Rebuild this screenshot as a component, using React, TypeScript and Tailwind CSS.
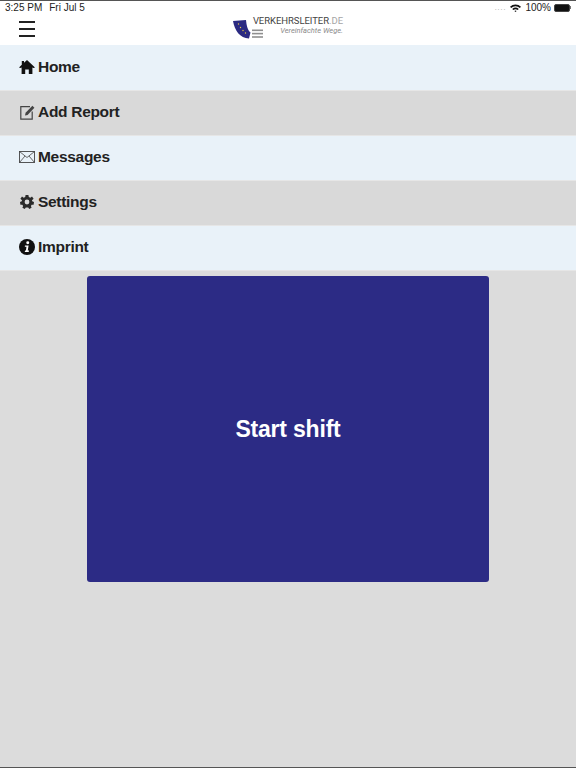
import React from "react";

const font = { fontFamily: '"Liberation Sans", Arial, sans-serif' };

function HomeIcon() {
  return (
    <svg width="16" height="14" viewBox="0 0 16 14" className="block">
      <path d="M8 0 L16 7.4 L14.6 7.9 L13.4 7.4 V14 H9.8 V9.6 H6.2 V14 H2.6 V7.4 L1.4 7.9 L0 7.4 L2.8 4.8 V1 H5 V2.8 Z" fill="#111" />
    </svg>
  );
}

function EditIcon() {
  return (
    <svg width="15" height="15" viewBox="0 0 15 15" className="block">
      <path d="M10 1.7 H0.8 V14.2 H12.2 V6.5" fill="none" stroke="#444" strokeWidth="1.2" />
      <path d="M5 10.5 L5.6 7.7 L12.4 0.8 L14.4 2.8 L7.6 9.9 Z" fill="#444" />
    </svg>
  );
}

function MailIcon() {
  return (
    <svg width="16" height="12" viewBox="0 0 16 12" className="block">
      <rect x="0.5" y="0.5" width="15" height="11" fill="none" stroke="#444" strokeWidth="0.9" />
      <path d="M0.5 0.5 L8 6.5 L15.5 0.5 M0.5 11.5 L6 5 M15.5 11.5 L10 5" fill="none" stroke="#444" strokeWidth="0.8" />
    </svg>
  );
}

function GearIcon() {
  return (
    <svg width="14" height="14" viewBox="0 0 14 14" className="block">
      <path
        fillRule="evenodd"
        fill="#2a2a2a"
        d="M5.6 0 H8.4 L8.8 2 L10.3 2.7 L12 1.6 L13.6 3.8 L12 5.2 L12.2 6.2 L14 7 L13.6 9.7 L11.7 9.7 L10.9 11 L11.6 12.8 L9.2 14 L8.2 12.4 H5.8 L4.8 14 L2.4 12.8 L3.1 11 L2.3 9.7 L0.4 9.7 L0 7 L1.8 6.2 L2 5.2 L0.4 3.8 L2 1.6 L3.7 2.7 L5.2 2 Z M7 4.6 A2.4 2.4 0 1 0 7 9.4 A2.4 2.4 0 1 0 7 4.6 Z"
      />
    </svg>
  );
}

function InfoIcon() {
  return (
    <svg width="16" height="16" viewBox="0 0 15 15" className="block">
      <circle cx="7.5" cy="7.5" r="7.5" fill="#111" />
      <circle cx="8.2" cy="3.6" r="1.4" fill="#fff" />
      <path d="M5.6 6 H9 L8.2 10.8 H9.4 L9.1 12.2 H5.4 L5.7 10.8 H6.5 L7 7.3 H5.4 Z" fill="#fff" />
    </svg>
  );
}

function Logo() {
  return (
    <div className="flex w-[110px] items-start">
      <svg width="30" height="24" viewBox="0 0 30 24" className="mt-[2px] block shrink-0">
        <path d="M0 2 L13 1 C13.5 6 14.5 11 17.5 13.5 L16 19.5 C7 19.5 1.5 11 0 2 Z" fill="#2b2a82" />
        <circle cx="5.5" cy="5" r="0.7" fill="#e5c84a" />
        <circle cx="7.5" cy="8.5" r="0.7" fill="#e5c84a" />
        <circle cx="10" cy="11.5" r="0.7" fill="#e5c84a" />
        <circle cx="12.5" cy="14" r="0.7" fill="#e5c84a" />
        <rect x="19" y="10.5" width="11" height="1.6" fill="#8f8f8f" />
        <rect x="19" y="13.8" width="11" height="1.6" fill="#8f8f8f" />
        <rect x="19" y="17.2" width="11" height="1.6" fill="#8f8f8f" />
      </svg>
      <div className="ml-[-11px] mt-[-2px] flex flex-1 flex-col items-end" style={{ fontFamily: 'Roboto, sans-serif' }}>
        <div className="whitespace-nowrap text-[9.5px] leading-[11px] tracking-[-0.05px] text-[#444]">
          VERKEHRSLEITER<span className="text-[#a5a5a5]">.DE</span>
        </div>
        <div className="whitespace-nowrap text-[7.5px] italic leading-[10px] text-[#8a8a8a]">Vereinfachte Wege.</div>
      </div>
    </div>
  );
}

const items: { label: string; icon: React.ReactNode; dark: boolean; first?: boolean }[] = [
  { label: "Home", icon: <HomeIcon />, dark: false, first: true },
  { label: "Add Report", icon: <EditIcon />, dark: true },
  { label: "Messages", icon: <MailIcon />, dark: false },
  { label: "Settings", icon: <GearIcon />, dark: true },
  { label: "Imprint", icon: <InfoIcon />, dark: false },
];

export default function App() {
  return (
    <div className="flex h-[768px] w-[576px] flex-col overflow-hidden border-y border-y-[#555] bg-[#dcdcdc]" style={font}>
      <div className="flex h-[44px] shrink-0 flex-col bg-white">
        <div className="flex h-[13px] items-center justify-between pl-[5px] pr-[5px] text-[10px] text-[#222]">
          <div className="flex gap-[7px]">
            <span>3:25 PM</span>
            <span>Fri Jul 5</span>
          </div>
          <div className="flex items-center gap-[4px]">
            <span className="text-[7px] leading-none tracking-[1px] text-[#999]">....</span>
            <svg width="11" height="8" viewBox="0 0 11 8" className="block">
              <path d="M0 2.7 A8 8 0 0 1 11 2.7 L9.8 3.9 A6.3 6.3 0 0 0 1.2 3.9 Z M2.2 4.9 A5 5 0 0 1 8.8 4.9 L7.6 6 A3.3 3.3 0 0 0 3.4 6 Z M4.4 7 A1.7 1.7 0 0 1 6.6 7 L5.5 8 Z" fill="#111" />
            </svg>
            <span className="mr-[-1px]">100%</span>
            <div className="flex items-center">
              <div className="h-[8px] w-[16px] rounded-[2px] border border-[#444] bg-[#111]" />
              <div className="h-[3px] w-[1px] bg-[#777]" />
            </div>
          </div>
        </div>
        <div className="relative flex flex-1 items-center justify-center">
          <div className="absolute left-[19px] top-[7px] flex w-[16px] flex-col gap-[5px]">
            <div className="h-[2px] bg-[#222]" />
            <div className="h-[2px] bg-[#222]" />
            <div className="h-[2px] bg-[#222]" />
          </div>
          <Logo />
        </div>
      </div>
      <nav className="flex shrink-0 flex-col">
        {items.map((it) => (
          <div
            key={it.label}
            className={
              "flex items-center gap-[3px] border-b border-b-[#e6e6e6] pl-[19px] text-[15.5px] font-bold tracking-[-0.3px] text-[#222] " +
              (it.first ? "h-[46px] pb-[1px] " : "h-[45px] pb-[2px] ") +
              (it.dark ? "bg-[#d9d9d9]" : "bg-[#e9f2f9]")
            }
          >
            <div className="flex w-[16px] justify-center">{it.icon}</div>
            <span>{it.label}</span>
          </div>
        ))}
      </nav>
      <div className="flex justify-center pt-[5px]">
        <button className="flex h-[306px] w-[402px] items-center justify-center rounded-[3px] bg-[#2c2b85] text-[23px] font-bold tracking-[-0.2px] text-white">
          Start shift
        </button>
      </div>
    </div>
  );
}
